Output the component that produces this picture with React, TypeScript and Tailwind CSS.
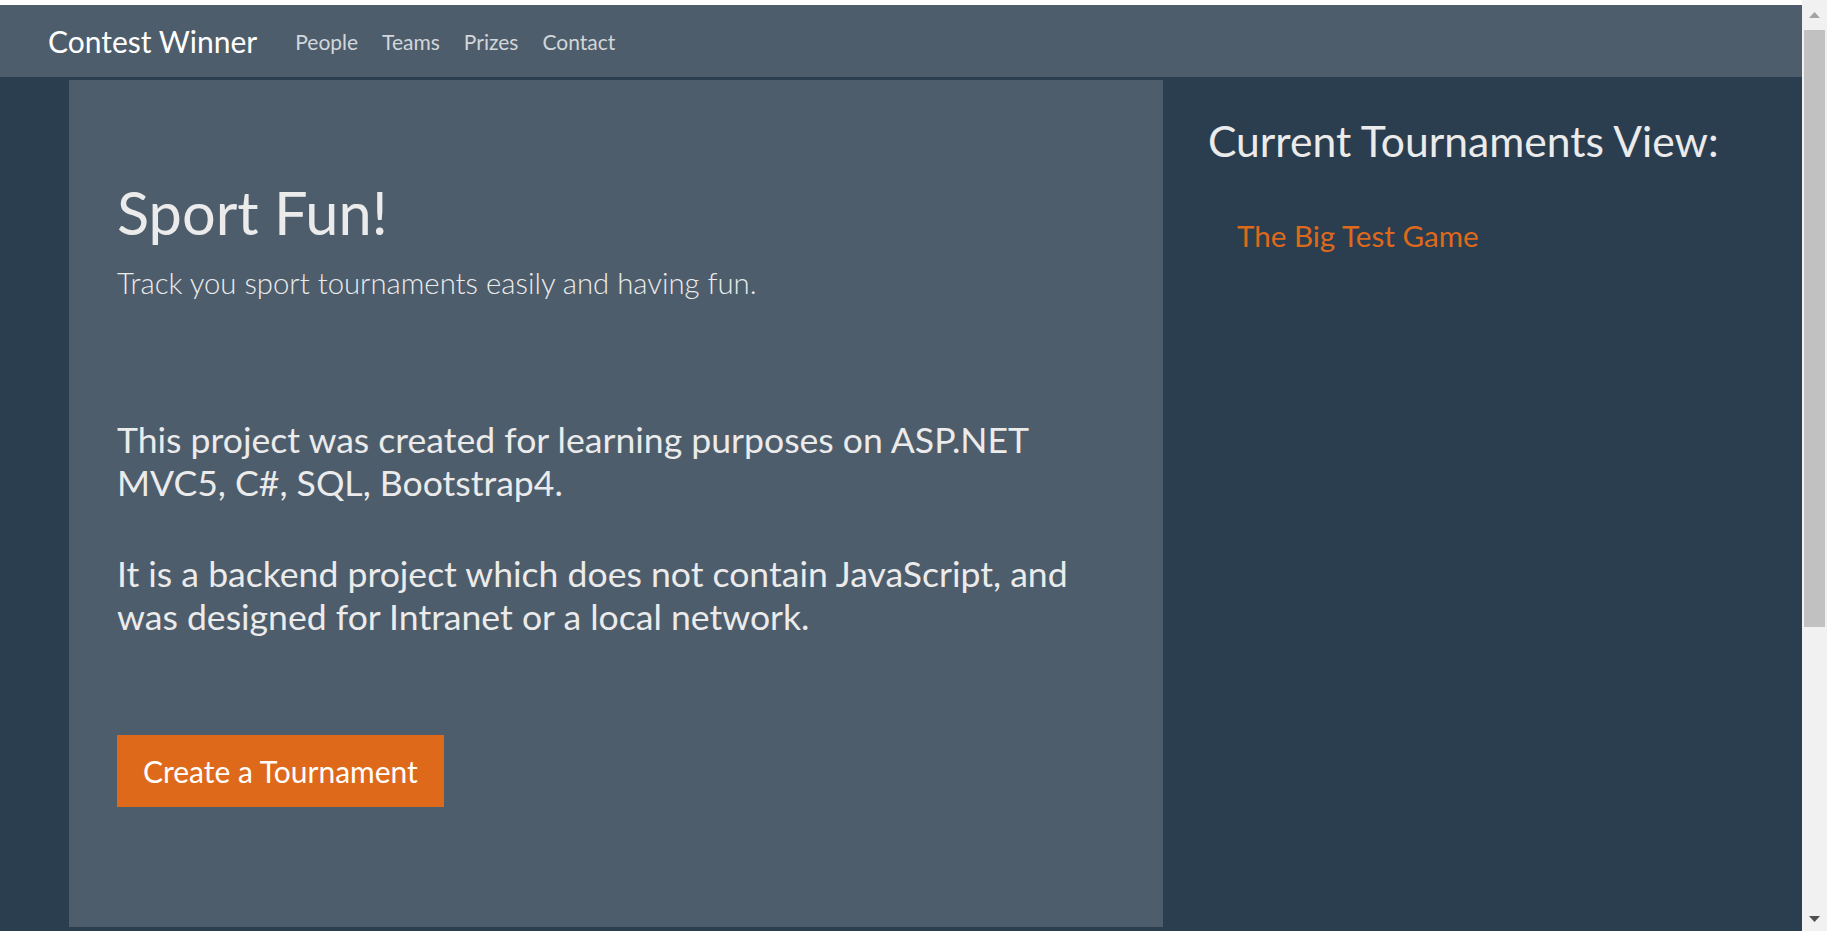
import React from "react";

const navLinks = ["People", "Teams", "Prizes", "Contact"];

function Scrollbar() {
  return (
    <div className="w-[25px] h-full bg-[#f1f1f1] flex flex-col items-center shrink-0">
      <div className="h-[30px] w-full flex items-center justify-center">
        <svg width="11" height="6" viewBox="0 0 11 6">
          <polygon points="0,6 11,6 5.5,0" fill="#a3a3a3" />
        </svg>
      </div>
      <div className="w-[21px] h-[597px] bg-[#c1c1c1]"></div>
      <div className="flex-1"></div>
      <div className="h-[25px] w-full flex items-center justify-center">
        <svg width="11" height="6" viewBox="0 0 11 6">
          <polygon points="0,0 11,0 5.5,6" fill="#505050" />
        </svg>
      </div>
    </div>
  );
}

function Navbar() {
  return (
    <nav className="h-[72px] bg-[#4e5d6c] flex items-center pl-[48px] shrink-0">
      <a className="text-[30px] leading-[36px] text-white mr-[26px]">
        Contest Winner
      </a>
      <ul className="flex items-center pt-[2px]">
        {navLinks.map((link) => (
          <li key={link}>
            <a className="block px-[12px] text-[21px] leading-[32px] text-white/75">
              {link}
            </a>
          </li>
        ))}
      </ul>
    </nav>
  );
}

export default function App() {
  return (
    <div className="w-full h-[931px] flex overflow-hidden bg-white font-['Lato','Noto_Sans',sans-serif]">
      <div className="flex-1 flex flex-col">
        <div className="h-[5px] bg-white shrink-0"></div>
        <Navbar />
        <main className="flex-1 bg-[#2b3e50] flex pt-[3px] pb-[4px]">
          <section className="ml-[69px] w-[1094px] bg-[#4e5d6c] px-[48px] pt-[98px] text-[#ebebeb]">
            <h1 className="text-[59.5px] leading-[68px]">Sport Fun!</h1>
            <p className="mt-[16px] text-[29.3px] leading-[42px] font-light">
              Track you sport tournaments easily and having fun.
            </p>
            <p className="mt-[114px] text-[35.6px] leading-[43px]">
              This project was created for learning purposes on ASP.NET
              <br />
              MVC5, C#, SQL, Bootstrap4.
            </p>
            <p className="mt-[48px] text-[35.6px] leading-[43px]">
              It is a backend project which does not contain JavaScript, and
              <br />
              was designed for Intranet or a local network.
            </p>
            <button className="mt-[97px] h-[72px] px-[26px] bg-[#df691a] text-white text-[30px] leading-[42px]">
              Create a Tournament
            </button>
          </section>
          <aside className="pl-[45px] pt-[36px] text-[#ebebeb]">
            <h2 className="text-[42.6px] leading-[50px]">
              Current Tournaments View:
            </h2>
            <ul className="mt-[52px] pl-[29px]">
              <li>
                <a className="text-[29.6px] leading-[36px] text-[#df691a]">
                  The Big Test Game
                </a>
              </li>
            </ul>
          </aside>
        </main>
      </div>
      <Scrollbar />
    </div>
  );
}
